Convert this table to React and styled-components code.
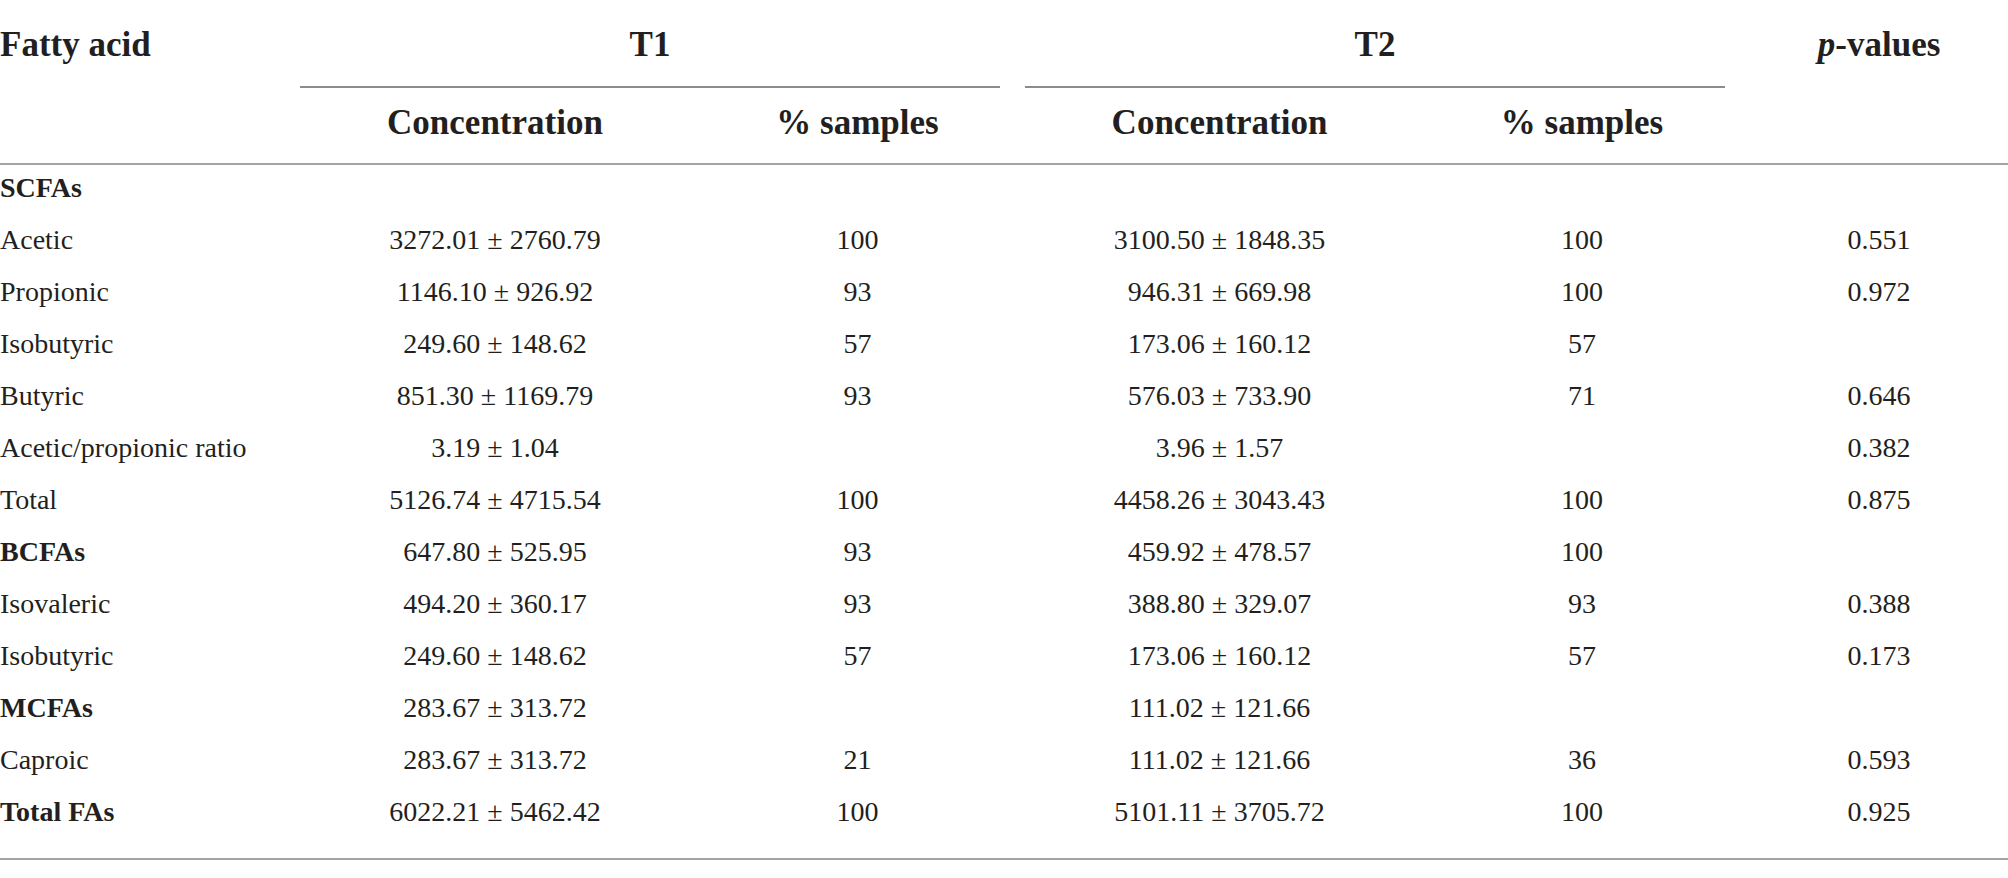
import React from "react";
import styled, { createGlobalStyle } from "styled-components";

const Global = createGlobalStyle`
  html, body { margin: 0; padding: 0; background: #ffffff; }
  body { font-family: "Liberation Serif", "Times New Roman", serif; color: #231f20; }
`;

const Table = styled.table`
  width: 2008px;
  table-layout: fixed;
  border-collapse: separate;
  border-spacing: 0;
  font-family: "Liberation Serif", "Times New Roman", serif;
  color: #231f20;
`;

const HeadCell = styled.th`
  font-size: 35px;
  line-height: 39px;
  font-weight: 700;
  text-align: ${(p) => p.$align || "center"};
  vertical-align: top;
  padding: 25px 0 21px 0;
  border-bottom: 2px solid #a4a4a4;
  white-space: nowrap;
`;

const GroupCell = styled.th`
  font-size: 35px;
  line-height: 39px;
  font-weight: 700;
  text-align: center;
  vertical-align: top;
  padding: 25px 0 0 0;
`;

const GroupLabel = styled.div`
  margin-right: 25px;
  padding-bottom: 22px;
  border-bottom: 2px solid #8c8c8c;
`;

const SubHeadCell = styled.th`
  font-size: 35px;
  line-height: 39px;
  font-weight: 700;
  text-align: center;
  padding: 15px 0 21px 0;
  border-bottom: 2px solid #a4a4a4;
  white-space: nowrap;
`;

const Row = styled.tr``;

const Cell = styled.td`
  font-size: 28px;
  line-height: 31px;
  font-weight: ${(p) => (p.$bold ? 700 : 400)};
  text-align: ${(p) => p.$align || "center"};
  padding: 7px 0 ${(p) => (p.$last ? "31px" : "14px")} 0;
  border-bottom: ${(p) => (p.$last ? "2px solid #a4a4a4" : "none")};
  white-space: nowrap;
`;

const rows = [
  ["SCFAs", "", "", "", "", "", true],
  ["Acetic", "3272.01 ± 2760.79", "100", "3100.50 ± 1848.35", "100", "0.551"],
  ["Propionic", "1146.10 ± 926.92", "93", "946.31 ± 669.98", "100", "0.972"],
  ["Isobutyric", "249.60 ± 148.62", "57", "173.06 ± 160.12", "57", ""],
  ["Butyric", "851.30 ± 1169.79", "93", "576.03 ± 733.90", "71", "0.646"],
  ["Acetic/propionic ratio", "3.19 ± 1.04", "", "3.96 ± 1.57", "", "0.382"],
  ["Total", "5126.74 ± 4715.54", "100", "4458.26 ± 3043.43", "100", "0.875"],
  ["BCFAs", "647.80 ± 525.95", "93", "459.92 ± 478.57", "100", "", true],
  ["Isovaleric", "494.20 ± 360.17", "93", "388.80 ± 329.07", "93", "0.388"],
  ["Isobutyric", "249.60 ± 148.62", "57", "173.06 ± 160.12", "57", "0.173"],
  ["MCFAs", "283.67 ± 313.72", "", "111.02 ± 121.66", "", "", true],
  ["Caproic", "283.67 ± 313.72", "21", "111.02 ± 121.66", "36", "0.593"],
  ["Total FAs", "6022.21 ± 5462.42", "100", "5101.11 ± 3705.72", "100", "0.925", true],
];

const widths = [300, 390, 335, 389, 336, 258];

export default function App() {
  return (
    <>
      <Global />
      <Table>
        <colgroup>
          {widths.map((w, i) => (
            <col key={i} style={{ width: w }} />
          ))}
        </colgroup>
        <thead>
          <tr>
            <HeadCell rowSpan={2} $align="left">Fatty acid</HeadCell>
            <GroupCell colSpan={2}>
              <GroupLabel>T1</GroupLabel>
            </GroupCell>
            <GroupCell colSpan={2}>
              <GroupLabel>T2</GroupLabel>
            </GroupCell>
            <HeadCell rowSpan={2}>
              <i>p</i>-values
            </HeadCell>
          </tr>
          <tr>
            <SubHeadCell>Concentration</SubHeadCell>
            <SubHeadCell>% samples</SubHeadCell>
            <SubHeadCell>Concentration</SubHeadCell>
            <SubHeadCell>% samples</SubHeadCell>
          </tr>
        </thead>
        <tbody>
          {rows.map((r, i) => {
            const last = i === rows.length - 1;
            return (
              <Row key={i}>
                <Cell $align="left" $bold={r[6]} $last={last}>{r[0]}</Cell>
                <Cell $last={last}>{r[1]}</Cell>
                <Cell $last={last}>{r[2]}</Cell>
                <Cell $last={last}>{r[3]}</Cell>
                <Cell $last={last}>{r[4]}</Cell>
                <Cell $last={last}>{r[5]}</Cell>
              </Row>
            );
          })}
        </tbody>
      </Table>
    </>
  );
}
